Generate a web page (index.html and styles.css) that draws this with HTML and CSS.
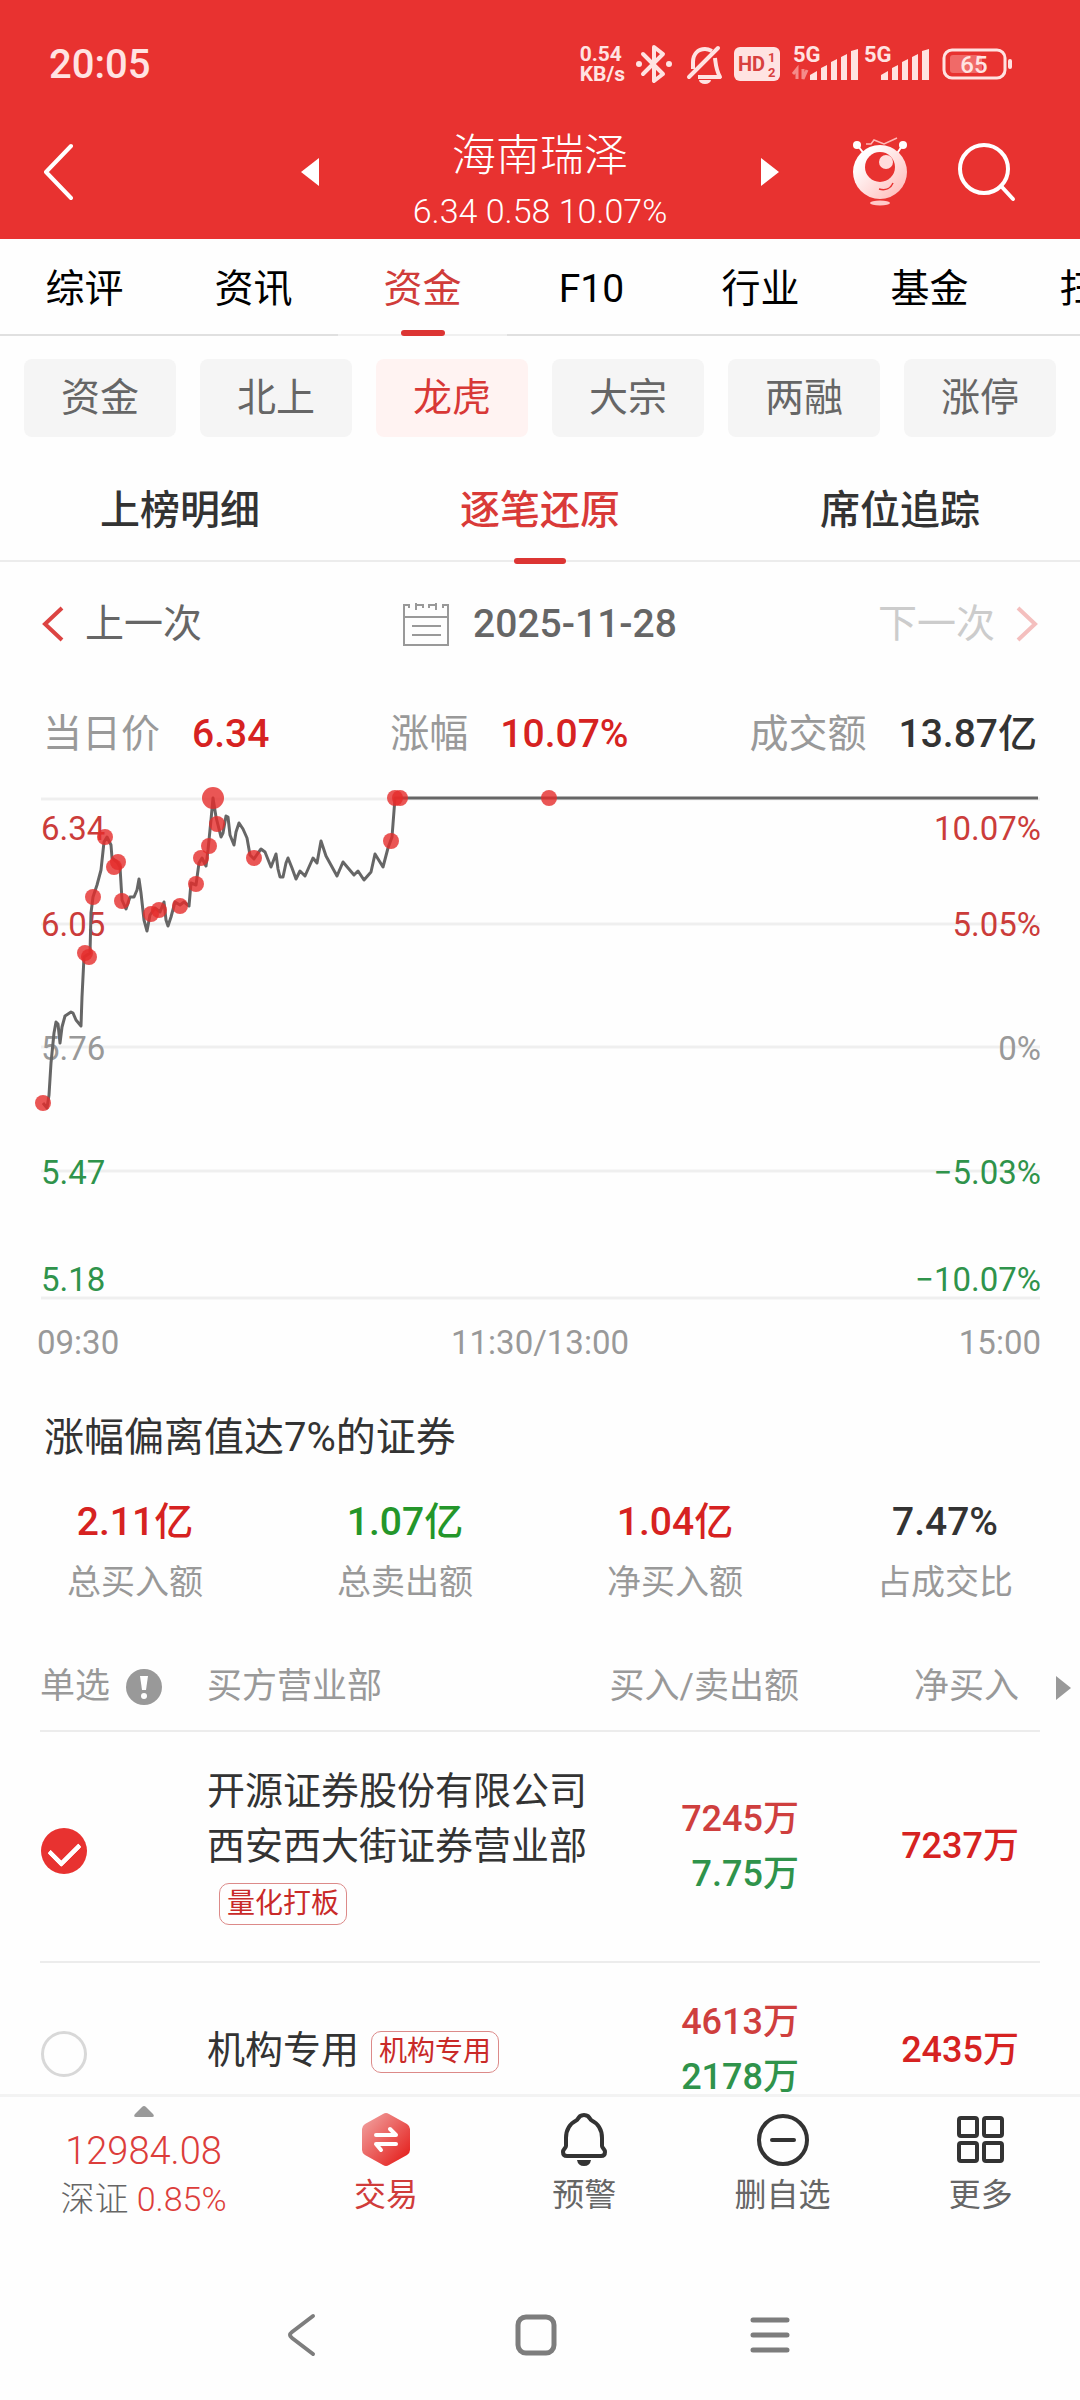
FILE: index.html
```
<!DOCTYPE html>
<html lang="zh-CN">
<head>
  <meta charset="UTF-8" />
  <meta name="viewport" content="width=device-width, initial-scale=1" />
  <title>海南瑞泽 - 龙虎</title>
  <link rel="stylesheet" href="styles.css">
</head>
<body>
  <header class="header">
    <div class="status-bar">
      <span class="clock">20:05</span>
      <span class="net-speed">0.54<br>KB/s</span>
      <svg class="status-icons" viewBox="634 40 380 48">
        <!-- bluetooth -->
        <path d="M643 54l20 20-9 7V47l9 7-20 20" fill="none" stroke="#ffe3e2" stroke-width="4" stroke-linejoin="round" stroke-linecap="round" />
        <circle cx="639" cy="64" r="3" fill="#ffe3e2" />
        <circle cx="669" cy="64" r="3" fill="#ffe3e2" />
        <!-- muted bell -->
        <path d="M693 69V62c0-8 5-13 12-13 3 0 5 1 7 2M715 58c1 8 1 12 5 19H698" fill="none" stroke="#ffe3e2" stroke-width="4" stroke-linejoin="round" />
        <path d="M689 77l29-29" stroke="#ffe3e2" stroke-width="4" stroke-linecap="round" />
        <path d="M699 80h12a6 4 0 0 1-12 0z" fill="#ffe3e2" />
        <!-- HD -->
        <rect x="734" y="47" width="46" height="34" rx="6" fill="#ffe3e2" />
        <text x="738" y="71" font-size="20" font-weight="700" fill="#d8403e">HD</text>
        <text x="768" y="62" font-size="13" font-weight="700" fill="#d8403e">1</text>
        <text x="768" y="77" font-size="13" font-weight="700" fill="#d8403e">2</text>
        <!-- signal 1 -->
        <text x="793" y="62" font-size="22" font-weight="700" fill="#ffe3e2">5G</text>
        <path d="M797 79V69l-4 5M803 69v10l4-9" fill="none" stroke="#f58b89" stroke-width="3" />
        <path d="M810 80v-5l7-4v9zM821 80V68l6-3v15zM831 80V62l6-3v21zM841 80V57l6-3v26zM851 80V51l7-2v31z" fill="#ffe3e2" />
        <!-- signal 2 -->
        <text x="864" y="62" font-size="22" font-weight="700" fill="#ffe3e2">5G</text>
        <path d="M881 80v-5l7-4v9zM892 80V68l6-3v15zM902 80V62l6-3v21zM912 80V57l6-3v26zM922 80V51l7-2v31z" fill="#ffe3e2" />
        <!-- battery -->
        <rect x="944" y="50" width="61" height="28" rx="8" fill="none" stroke="#ffe3e2" stroke-width="3" />
        <rect x="950" y="55" width="32" height="18" rx="3" fill="#f06a68" />
        <rect x="1008" y="59" width="4" height="10" rx="2" fill="#ffe3e2" />
        <text x="974" y="73" font-size="24" font-weight="500" fill="#ffe3e2" text-anchor="middle">65</text>
      </svg>
    </div>
    <div class="title-bar">
      <button class="icon-btn back-btn" aria-label="返回">
        <svg width="30" height="58" viewBox="0 0 30 58"><path d="M28 3L3 29l25 26" fill="none" stroke="#fff" stroke-width="4" stroke-linecap="round" stroke-linejoin="round" /></svg>
      </button>
      <div class="stock-switch">
        <button class="icon-btn" aria-label="上一只">
          <svg width="18" height="28" viewBox="0 0 18 28"><path d="M18 0v28L0 14z" fill="#fff" /></svg>
        </button>
        <div class="stock">
          <h1>海南瑞泽</h1>
          <p>6.34 0.58 10.07%</p>
        </div>
        <button class="icon-btn" aria-label="下一只">
          <svg width="18" height="28" viewBox="0 0 18 28"><path d="M0 0v28l18-14z" fill="#fff" /></svg>
        </button>
      </div>
      <div class="title-actions">
        <button class="icon-btn" aria-label="助手">
          <svg width="54" height="70" viewBox="0 0 54 70">
            <defs>
              <linearGradient id="robot" x1="0" y1="0" x2="1" y2="1">
                <stop offset="0.2" stop-color="#fff" />
                <stop offset="1" stop-color="#ffb5b3" />
              </linearGradient>
            </defs>
            <path d="M13 7h5l3-4 10 4L44 1" fill="none" stroke="#ffb9b7" stroke-width="1.5" />
            <path d="M5 9l7 9M49 9l-6 9" stroke="#fff" stroke-width="2" />
            <circle cx="4" cy="8" r="4" fill="#fff" />
            <circle cx="50" cy="8" r="4" fill="#fff" />
            <circle cx="27" cy="35" r="27" fill="url(#robot)" />
            <circle cx="27" cy="30" r="15" fill="#e83230" />
            <circle cx="33" cy="25" r="7" fill="#ffdddc" />
            <path d="M26 52c7 2 12-1 14-6" fill="none" stroke="#e83230" stroke-width="1.5" />
            <ellipse cx="27" cy="66" rx="10" ry="2.5" fill="#ffc9c8" />
          </svg>
        </button>
        <button class="icon-btn" aria-label="搜索">
          <svg width="58" height="60" viewBox="0 0 58 60"><circle cx="26" cy="27" r="24" fill="none" stroke="#fff" stroke-width="4" /><path d="M43 44l12 13" stroke="#fff" stroke-width="4" stroke-linecap="round" /></svg>
        </button>
      </div>
    </div>
  </header>

  <nav class="tabs">
    <a href="#">综评</a>
    <a href="#">资讯</a>
    <a href="#" class="active">资金</a>
    <a href="#">F10</a>
    <a href="#">行业</a>
    <a href="#">基金</a>
    <a href="#">扫雷</a>
  </nav>

  <main class="content">
    <div class="chips">
      <button>资金</button>
      <button>北上</button>
      <button class="active">龙虎</button>
      <button>大宗</button>
      <button>两融</button>
      <button>涨停</button>
    </div>

    <nav class="subtabs">
      <a href="#">上榜明细</a>
      <a href="#" class="active">逐笔还原</a>
      <a href="#">席位追踪</a>
    </nav>

    <div class="date-row">
      <button class="step-btn">
        <svg width="22" height="36" viewBox="0 0 22 36"><path d="M20 2L3 18l17 16" fill="none" stroke="#dc4442" stroke-width="4" /></svg>
        上一次
      </button>
      <button class="date-btn">
        <svg width="46" height="44" viewBox="0 0 46 44">
          <path d="M6 3H1v40h44V3h-5M13 3h7M26 3h7M1 15h44" fill="none" stroke="#999" stroke-width="2" />
          <path d="M13 1v7M33 1v7M6 2v4M40 2v4M20 2v4M26 2v4M9 24h29M9 33h29" fill="none" stroke="#999" stroke-width="2" />
        </svg>
        2025-11-28
      </button>
      <button class="step-btn" disabled>
        下一次
        <svg width="22" height="36" viewBox="0 0 22 36"><path d="M2 2l17 16L2 34" fill="none" stroke="#f4bfbe" stroke-width="4" /></svg>
      </button>
    </div>

    <dl class="quote">
      <div><dt>当日价</dt><dd class="red">6.34</dd></div>
      <div><dt>涨幅</dt><dd class="red">10.07%</dd></div>
      <div><dt>成交额</dt><dd>13.87亿</dd></div>
    </dl>

    <svg class="chart" viewBox="0 780 1080 590">
      <path class="grid" d="M41 799h999M41 924h999M41 1047h999M41 1171h999M41 1298h999" />

      <g class="axis-label">
        <text class="up" x="41" y="840">6.34</text>
        <text class="up" x="41" y="936">6.05</text>
        <text x="41" y="1060">5.76</text>
        <text class="down" x="41" y="1184">5.47</text>
        <text class="down" x="41" y="1291">5.18</text>
      </g>
      <g class="axis-label end">
        <text class="up" x="1041" y="840">10.07%</text>
        <text class="up" x="1041" y="936">5.05%</text>
        <text x="1041" y="1060">0%</text>
        <text class="down" x="1041" y="1184">−5.03%</text>
        <text class="down" x="1041" y="1291">−10.07%</text>
        <text x="1041" y="1354">15:00</text>
      </g>
      <text class="axis-label" x="37" y="1354">09:30</text>
      <text class="axis-label middle" x="540" y="1354">11:30/13:00</text>

      <polyline class="price" points="43,1103 47,1108 49,1095 51,1063 54,1033 56,1022 58,1024 60,1043 62,1027 65,1016 71,1012 73,1013 76,1020 81,1026 82,997 84,957 87,955 90,953 91,913 93,897 97,885 101,870 104,842 107,837 111,845 112,858 117,862 120,867 122,900 126,909 130,897 134,897 137,890 139,879 141,893 144,920 147,931 150,915 155,908 160,912 164,902 166,920 168,926 171,917 175,902 180,905 184,902 189,906 191,883 196,885 199,863 202,858 206,866 208,850 211,820 213,798 216,817 221,837 223,833 226,816 228,817 230,835 234,845 236,832 239,823 243,829 247,838 250,855 254,859 258,853 261,849 265,852 271,867 276,854 278,869 280,877 283,877 286,863 288,858 292,868 296,879 300,871 305,876 313,858 317,863 321,841 326,856 337,876 343,862 354,875 358,871 364,880 371,872 375,854 383,867 388,848 392,837 395,798 1038,798" />

      <g class="dots">
        <circle cx="43" cy="1103" r="8" />
        <circle cx="85" cy="953" r="8" />
        <circle cx="89" cy="957" r="8" />
        <circle cx="93" cy="897" r="8" />
        <circle cx="105" cy="837" r="8" />
        <circle cx="114" cy="867" r="8" />
        <circle cx="118" cy="862" r="8" />
        <circle cx="122" cy="901" r="8" />
        <circle cx="151" cy="914" r="8" />
        <circle cx="159" cy="910" r="8" />
        <circle cx="180" cy="906" r="8" />
        <circle cx="196" cy="884" r="8" />
        <circle cx="201" cy="858" r="8" />
        <circle cx="209" cy="846" r="8" />
        <circle cx="213" cy="798" r="11" />
        <circle cx="217" cy="824" r="8" />
        <circle cx="254" cy="858" r="8" />
        <circle cx="391" cy="841" r="8" />
        <circle cx="395" cy="798" r="8" />
        <circle cx="400" cy="798" r="8" />
        <circle cx="549" cy="798" r="8" />
      </g>
    </svg>

    <h2 class="reason">涨幅偏离值达7%的证券</h2>
    <dl class="summary">
      <div><dd class="red">2.11亿</dd><dt>总买入额</dt></div>
      <div><dd class="green">1.07亿</dd><dt>总卖出额</dt></div>
      <div><dd class="red">1.04亿</dd><dt>净买入额</dt></div>
      <div><dd>7.47%</dd><dt>占成交比</dt></div>
    </dl>

    <div class="seats">
      <table>
        <thead>
          <tr>
            <th class="col-pick">
              <div class="pick-head">
                单选
                <svg width="36" height="36" viewBox="0 0 36 36"><circle cx="18" cy="18" r="18" fill="#999" /><path d="M14 7h8l-2 14h-4z" fill="#fff" /><circle cx="18" cy="27" r="3" fill="#fff" /></svg>
              </div>
            </th>
            <th>买方营业部</th>
            <th class="col-amount">买入/卖出额</th>
            <th class="col-net">净买入</th>
          </tr>
        </thead>
        <tbody>
          <tr>
            <td><input type="radio" name="seat" id="seat1" checked></td>
            <td><label for="seat1">开源证券股份有限公司<br>西安西大街证券营业部<br><span class="tag">量化打板</span></label></td>
            <td class="col-amount"><span class="buy">7245万</span><br><span class="sell">7.75万</span></td>
            <td class="col-net red">7237万</td>
          </tr>
          <tr>
            <td><input type="radio" name="seat" id="seat2"></td>
            <td><label for="seat2">机构专用<span class="tag">机构专用</span></label></td>
            <td class="col-amount"><span class="buy">4613万</span><br><span class="sell">2178万</span></td>
            <td class="col-net red">2435万</td>
          </tr>
        </tbody>
      </table>
      <svg class="more-cols" width="15" height="24" viewBox="0 0 15 24"><path d="M0 0v24l15-12z" fill="#999" /></svg>
    </div>
  </main>

  <footer class="toolbar">
    <button class="index">
      <svg width="20" height="11" viewBox="0 0 20 11"><path d="M8 1q2-2 4 0l7 7q2 3-1 3H2q-3 0-1-3z" fill="#999" /></svg>
      <span class="index-value">12984.08</span>
      <span class="index-change">深证 <em>0.85%</em></span>
    </button>
    <button class="tool trade">
      <svg width="56" height="56" viewBox="0 0 56 56">
        <defs>
          <linearGradient id="hex" x1="0" y1="0" x2="1" y2="1">
            <stop offset="0.1" stop-color="#f09a98" />
            <stop offset="0.9" stop-color="#e52320" />
          </linearGradient>
        </defs>
        <path d="M25 3q3-2 6 0l18 10q3 2 3 5v21q0 3-3 5L31 54q-3 2-6 0L7 44q-3-2-3-5V18q0-3 3-5z" fill="url(#hex)" />
        <path d="M18 24h20l-6-6M38 33H18l5 6" fill="none" stroke="#fff" stroke-width="4" stroke-linecap="round" stroke-linejoin="round" />
      </svg>
      交易
    </button>
    <button class="tool">
      <svg width="56" height="56" viewBox="0 0 56 56">
        <path d="M28 4c4 0 5 2 7 5 8 4 11 10 11 18v8c0 2 3 3 3 6 0 3-2 4-4 4H11c-2 0-4-1-4-4 0-3 3-4 3-6v-8c0-8 3-14 11-18 2-3 3-5 7-5z" fill="none" stroke="#333" stroke-width="4" stroke-linejoin="round" />
        <path d="M21 49h14q-1 6-7 6t-7-6z" fill="#333" />
      </svg>
      预警
    </button>
    <button class="tool">
      <svg width="56" height="56" viewBox="0 0 56 56"><circle cx="28" cy="29" r="24" fill="none" stroke="#333" stroke-width="4" /><path d="M17 29h22" stroke="#333" stroke-width="4" stroke-linecap="round" /></svg>
      删自选
    </button>
    <button class="tool">
      <svg width="56" height="56" viewBox="0 0 56 56"><g fill="none" stroke="#333" stroke-width="4"><rect x="6" y="7" width="18" height="18" rx="2" /><rect x="31" y="7" width="18" height="18" rx="2" /><rect x="6" y="32" width="18" height="18" rx="2" /><rect x="31" y="32" width="18" height="18" rx="2" /></g></svg>
      更多
    </button>
  </footer>

  <div class="system-nav">
    <button class="icon-btn" aria-label="系统返回">
      <svg width="44" height="44" viewBox="0 0 44 44"><path d="M33 3L12 19q-4 3 0 6l21 16" fill="none" stroke="#7d7d7d" stroke-width="4" stroke-linecap="round" /></svg>
    </button>
    <button class="icon-btn" aria-label="主屏幕">
      <svg width="44" height="44" viewBox="0 0 44 44"><rect x="4" y="4" width="36" height="36" rx="8" fill="none" stroke="#7d7d7d" stroke-width="5" /></svg>
    </button>
    <button class="icon-btn" aria-label="最近任务">
      <svg width="44" height="44" viewBox="0 0 44 44"><path d="M5 7h34M5 22h34M5 37h34" stroke="#7d7d7d" stroke-width="5" stroke-linecap="round" /></svg>
    </button>
  </div>
</body>
</html>
```

FILE: styles.css
```
* {
  box-sizing: border-box;
}
body {
  margin: 0;
  height: 100vh;
  display: flex;
  flex-direction: column;
  background: #fefefe;
  color: #333;
  font-family: Roboto, "Noto Sans CJK SC", sans-serif;
  font-size: 39px;
}
h1, h2, p, dl, dt, dd {
  margin: 0;
  font-weight: 400;
}
a {
  color: inherit;
  text-decoration: none;
}
button {
  padding: 0;
  border: none;
  background: none;
  color: inherit;
  font: inherit;
  cursor: pointer;
}
svg {
  display: block;
}
em {
  font-style: normal;
}
.icon-btn {
  display: flex;
}
.red {
  color: #d62221;
}
.green {
  color: #24962a;
}

/* header */
.header {
  background: #e83230;
  color: #fff;
}
.status-bar {
  display: flex;
  align-items: center;
  height: 128px;
  padding: 0 66px 0 49px;
  color: #ffe3e2;
}
.clock {
  flex: 1;
  font-size: 40px;
  font-weight: 500;
}
.net-speed {
  margin-right: 9px;
  font-size: 21px;
  font-weight: 700;
  line-height: 20px;
}
.status-icons {
  width: 380px;
  height: 48px;
}
.title-bar {
  display: grid;
  grid-template-columns: 1fr 478px 1fr;
  align-items: center;
  height: 111px;
}
.back-btn {
  justify-self: start;
  margin: 0 0 24px 43px;
}
.stock-switch {
  display: flex;
  align-items: center;
  justify-content: space-between;
}
.stock-switch .icon-btn {
  margin-bottom: 24px;
}
.stock {
  text-align: center;
}
.stock h1 {
  font-size: 44px;
  font-weight: 300;
  line-height: 56px;
}
.stock p {
  font-size: 34px;
  font-weight: 300;
  line-height: 55px;
}
.title-actions {
  display: flex;
  align-items: center;
  justify-content: flex-end;
  gap: 51px;
  padding: 0 64px 24px 0;
}

/* tabs */
.tabs {
  display: flex;
  overflow-x: auto;
  scrollbar-width: none;
  color: #000;
}
.tabs a {
  position: relative;
  flex: 0 0 169px;
  height: 97px;
  border-bottom: 2px solid #e0e0e0;
  line-height: 100px;
  text-align: center;
}
.tabs a.active {
  border-color: #f0f0f0;
  color: #d03c3a;
}
.tabs a.active::after,
.subtabs a.active::after {
  content: "";
  position: absolute;
  left: 50%;
  bottom: -2px;
  width: 44px;
  height: 6px;
  margin-left: -22px;
  border-radius: 3px;
  background: #dc3533;
}

.content {
  flex: 1;
  min-height: 0;
  overflow-y: auto;
  scrollbar-width: none;
}
.chips {
  display: grid;
  grid-template-columns: repeat(6, 1fr);
  gap: 24px;
  padding: 23px 24px 19px;
}
.chips button {
  height: 78px;
  border-radius: 8px;
  background: #f5f5f5;
  color: #666;
  line-height: 78px;
}
.chips .active {
  background: #fff3f2;
  color: #d83836;
}
.subtabs {
  display: grid;
  grid-template-columns: repeat(3, 1fr);
  border-bottom: 2px solid #ececec;
  font-size: 40px;
  font-weight: 500;
}
.subtabs a {
  position: relative;
  height: 104px;
  line-height: 110px;
  text-align: center;
}
.subtabs a.active {
  color: #d93a38;
}
.subtabs a.active::after {
  bottom: -4px;
  width: 52px;
  margin-left: -26px;
}

/* date + quote */
.date-row {
  display: flex;
  align-items: center;
  justify-content: space-between;
  height: 124px;
  padding: 0 42px;
  color: #666;
  line-height: 56px;
}
.step-btn,
.date-btn {
  display: flex;
  align-items: center;
  gap: 21px;
  line-height: inherit;
}
.step-btn:disabled {
  color: #ccc;
}
.date-btn {
  gap: 24px;
  font-weight: 500;
}
.quote {
  display: flex;
  align-items: center;
  justify-content: space-between;
  height: 94px;
  padding: 2px 43px 0;
  line-height: 56px;
}
.quote div {
  display: flex;
  gap: 32px;
}
.quote dt {
  color: #999;
}
.quote dd {
  font-weight: 500;
}

/* chart */
.chart {
  width: 100%;
}
.grid {
  stroke: #efefef;
  stroke-width: 3;
}
.price {
  fill: none;
  stroke: #666;
  stroke-width: 3;
  stroke-linejoin: round;
}
.dots {
  fill: #e52c2a;
  fill-opacity: 0.8;
}
.axis-label {
  font-size: 33px;
  fill: #999;
}
.axis-label .up {
  fill: #cb3c3a;
}
.axis-label .down {
  fill: #2f934b;
}
.end {
  text-anchor: end;
}
.middle {
  text-anchor: middle;
}

.reason {
  padding: 14px 44px 0;
  font-size: 40px;
  line-height: 108px;
}
.summary {
  display: grid;
  grid-template-columns: repeat(4, 1fr);
  text-align: center;
  line-height: 60px;
}
.summary dd {
  font-weight: 500;
}
.summary dt {
  color: #999;
  font-size: 34px;
}

/* seat table */
.seats {
  position: relative;
  margin-top: 30px;
  padding: 0 40px;
}
table {
  width: 100%;
  border-collapse: collapse;
  table-layout: fixed;
}
th {
  height: 89px;
  padding: 2px 0 0;
  border-bottom: 2px solid #ececec;
  color: #999;
  font-size: 35px;
  font-weight: 400;
  line-height: 50px;
  text-align: left;
}
td {
  padding: 32px 0;
  border-bottom: 2px solid #ececec;
  font-size: 38px;
  line-height: 55px;
}
.col-pick {
  width: 167px;
}
.pick-head {
  display: flex;
  align-items: center;
  gap: 16px;
}
.col-amount {
  width: 200px;
  text-align: right;
  white-space: nowrap;
}
.col-net {
  width: 241px;
  padding-right: 21px;
  text-align: right;
}
td.col-amount,
td.col-net {
  font-size: 36px;
  font-weight: 500;
}
.buy {
  color: #cf3f3e;
}
.sell {
  color: #2f934b;
}
.tag {
  display: inline-block;
  margin-left: 12px;
  padding: 0 7px;
  border: 1px solid #dc8a89;
  border-radius: 10px;
  color: #c92a28;
  font-size: 28px;
  line-height: 40px;
  vertical-align: middle;
}
input[type="radio"] {
  appearance: none;
  display: block;
  width: 46px;
  height: 46px;
  margin: 8px 0 0 1px;
  border: 3px solid #d8d8d8;
  border-radius: 50%;
}
input[type="radio"]:checked {
  display: flex;
  justify-content: center;
  border: none;
  background: #e83230;
}
input[type="radio"]:checked::before {
  content: "";
  width: 24px;
  height: 15px;
  margin-top: 12px;
  border-left: 5px solid #fff;
  border-bottom: 5px solid #fff;
  border-radius: 2px;
  transform: rotate(-45deg);
}
.more-cols {
  position: absolute;
  top: 34px;
  right: 9px;
}

/* bottom */
.toolbar {
  display: flex;
  align-items: flex-start;
  height: 176px;
  border-top: 3px solid #f3f3f3;
  background: #fefefe;
  color: #666;
}
.toolbar button {
  display: flex;
  flex-direction: column;
  align-items: center;
}
.index {
  flex: 0 0 287px;
  padding-top: 9px;
  line-height: 48px;
}
.index-value {
  margin-top: 10px;
  color: #dc3d3b;
  font-size: 38px;
  font-weight: 300;
}
.index-change {
  font-size: 34px;
  font-weight: 300;
}
.index-change em {
  color: #dc3d3b;
}
.tool {
  flex: 1;
  gap: 7px;
  padding-top: 14px;
  font-size: 32px;
  line-height: 42px;
}
.trade {
  color: #d03c3a;
}
.system-nav {
  display: flex;
  align-items: center;
  justify-content: center;
  gap: 190px;
  height: 130px;
  padding-right: 8px;
  background: #fefefe;
}
```
